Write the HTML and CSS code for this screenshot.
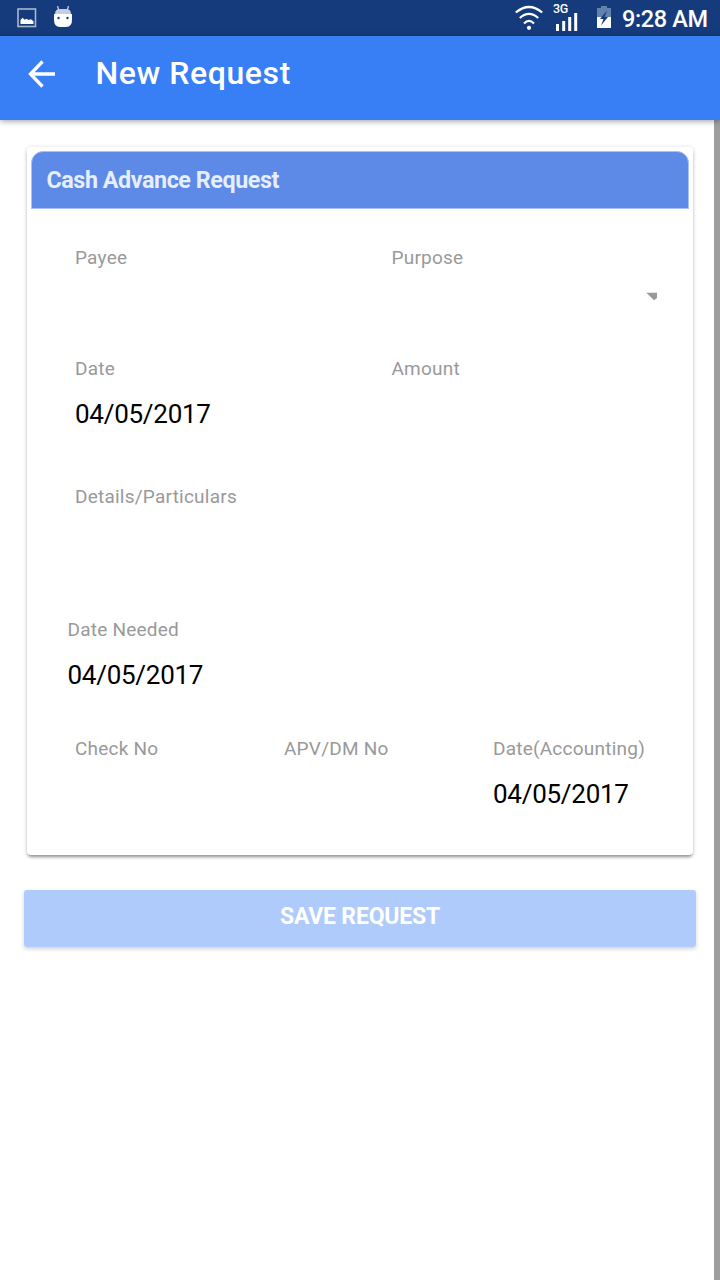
FILE: index.html
```html
<!DOCTYPE html>
<html lang="en">
<head>
<meta charset="utf-8">
<title>New Request</title>
<link rel="stylesheet" href="styles.css">
</head>
<body>
<div class="status-bar">
  <div class="notifications">
    <svg class="icon-picture" width="20" height="20" viewBox="0 0 20 20"><rect x="1" y="1" width="17.5" height="17.5" fill="none" stroke="#a9b7cf" stroke-width="1.6"/><path d="M3.5 16v-4l2-2.3 2.3 2 1.7-1 2 1.3 2.5-.8 2.5 2V16z" fill="#fff"/></svg>
    <svg class="icon-android" width="20" height="22" viewBox="0 0 20 22"><path d="M4.5 0l1.2 4M15.5 0l-1.2 4" stroke="#c4cee0" stroke-width="1.3"/><path d="M2 8Q2 3 7 3h6q5 0 5 5z" fill="#c4cee0"/><path d="M1 8h18v6q0 7-6 7H7q-6 0-6-7z" fill="#fff"/><circle cx="5.5" cy="12" r="1.2" fill="#153b7d"/><circle cx="14.5" cy="12" r="1.2" fill="#153b7d"/></svg>
  </div>
  <div class="system">
    <svg class="icon-wifi" width="28" height="26" viewBox="0 0 28 26"><g fill="none" stroke="#fff" stroke-width="2.2"><path d="M.8 7.5Q14-3.5 27.2 7.5"/><path d="M4.8 13Q14 4.8 23.2 13"/><path d="M9 18.5Q14 13.5 19 18.5"/></g><circle cx="14" cy="22.8" r="2.1" fill="#fff"/></svg>
    <div class="signal">
      <span class="network">3G</span>
      <svg width="22" height="18" viewBox="0 0 22 18"><path d="M0 11h3v7H0zM6.2 8h3v10h-3zM12.2 4h3v14h-3zM18.2 0h3v18h-3z" fill="#fff"/></svg>
    </div>
    <svg class="icon-battery" width="14" height="22" viewBox="0 0 14 22"><path d="M4 0h6v2h4v9H0V2h4z" fill="#6480ad"/><path d="M0 11h14v11H0z" fill="#fff"/><path d="M10 4.5L3 13h3.5L4 19.5l7-8.5H7.5z" fill="#153b7d"/></svg>
    <span class="clock">9:28 AM</span>
  </div>
</div>
<header class="toolbar">
  <svg class="back" width="28" height="28" viewBox="0 0 28 28"><path d="M14.5 1.5L2.5 14l12 12.5M2.5 14H27" fill="none" stroke="#fff" stroke-width="3.3"/></svg>
  <h1 class="title">New Request</h1>
</header>
<main class="content">
  <section class="card">
    <h2 class="card-header">Cash Advance Request</h2>
    <div class="form">
      <div class="row halves payee-row">
        <div class="field"><div class="label">Payee</div></div>
        <div class="field select"><div class="label">Purpose</div>
          <svg class="caret" width="12" height="9" viewBox="0 0 12 9"><path d="M.3.8H11V6L8 8.3z" fill="#999"/></svg>
        </div>
      </div>
      <div class="row halves date-row">
        <div class="field"><div class="label">Date</div><div class="value">04/05/2017</div></div>
        <div class="field"><div class="label">Amount</div></div>
      </div>
      <div class="row details-row">
        <div class="field"><div class="label">Details/Particulars</div></div>
      </div>
      <div class="row needed-row">
        <div class="field"><div class="label">Date Needed</div><div class="value">04/05/2017</div></div>
      </div>
      <div class="row thirds">
        <div class="field"><div class="label">Check No</div></div>
        <div class="field"><div class="label">APV/DM No</div></div>
        <div class="field"><div class="label">Date(Accounting)</div><div class="value">04/05/2017</div></div>
      </div>
    </div>
  </section>
  <button class="save" disabled>SAVE REQUEST</button>
</main>
</body>
</html>
```
FILE: styles.css
```css
* { box-sizing: border-box; }
body {
  margin: 0;
  height: 1280px;
  display: flex;
  flex-direction: column;
  overflow: hidden;
  background: #fff;
  font-family: Roboto, "Liberation Sans", sans-serif;
}
svg { display: block; flex: none; }
.status-bar {
  height: 36px;
  flex: none;
  display: flex;
  justify-content: space-between;
  background: #153b7d;
  color: #fff;
}
.notifications { display: flex; padding-left: 17px; gap: 16px; }
.icon-picture { margin-top: 8px; }
.icon-android { margin-top: 6px; }
.system { display: flex; padding-right: 12px; }
.icon-wifi { margin-top: 5px; }
.signal { width: 23px; margin: 3px 20px 0 11px; }
.network { display: block; height: 10px; margin-left: -1px; font-size: 12.5px; line-height: 12px; font-weight: 500; letter-spacing: -.3px; white-space: nowrap; }
.signal svg { margin-left: 2px; }
.icon-battery { margin-top: 6px; }
.clock { width: 86px; margin-left: 11px; font-size: 23.5px; line-height: 38px; font-weight: 500; letter-spacing: -.35px; white-space: nowrap; }
.toolbar {
  height: 84px;
  flex: none;
  display: flex;
  padding-left: 28px;
  background: #387ef5;
  color: #fff;
  z-index: 1;
  box-shadow: 0 1px 6px rgba(0, 0, 0, .4);
}
.back { margin-top: 24px; }
.title { margin: 18px 0 0 39.5px; font-size: 32px; line-height: 38px; font-weight: 500; letter-spacing: .58px; }
.content { flex: 1; padding: 27px 18px 0 24px; border-right: 6px solid #9e9e9e; }
.card {
  width: 666px;
  height: 708px;
  margin-left: 3px;
  padding: 4px;
  border-radius: 4px;
  background: #fff;
  box-shadow: 0 3px 3px -1px rgba(0, 0, 0, .35), 0 1px 5px rgba(0, 0, 0, .18);
}
.card-header {
  height: 58px;
  margin: 0;
  padding: 0 14.5px;
  border: 1px solid #a9c1f4;
  border-radius: 12px 12px 0 0;
  background: #5c8ae6;
  color: #e6eeff;
  font-size: 23.3px;
  line-height: 56px;
  font-weight: 700;
  letter-spacing: -.43px;
}
.form { padding: 37px 28px 0 44px; }
.row { display: grid; }
.halves { grid-template-columns: 316.5px 1fr; }
.thirds { grid-template-columns: 209px 209px 1fr; }
.payee-row { height: 111px; }
.date-row { height: 128px; }
.details-row { height: 133px; }
.needed-row { height: 119px; margin-left: -7.5px; }
.label { color: #999; font-size: 19px; line-height: 24px; letter-spacing: .23px; white-space: nowrap; }
.value { margin-top: 18px; color: #000; font-size: 26px; line-height: 30px; letter-spacing: -.27px; white-space: nowrap; }
.caret { margin: 22px 3px 0 auto; }
.save {
  display: block;
  width: 672px;
  height: 57px;
  margin-top: 34.5px;
  padding: 0 0 4px;
  border: 0;
  border-radius: 3px;
  background: #afcbfb;
  color: #fff;
  font: 700 23px/53px Roboto, "Liberation Sans", sans-serif;
  letter-spacing: -.2px;
  box-shadow: 0 2px 4px rgba(0, 0, 0, .18);
}
```
